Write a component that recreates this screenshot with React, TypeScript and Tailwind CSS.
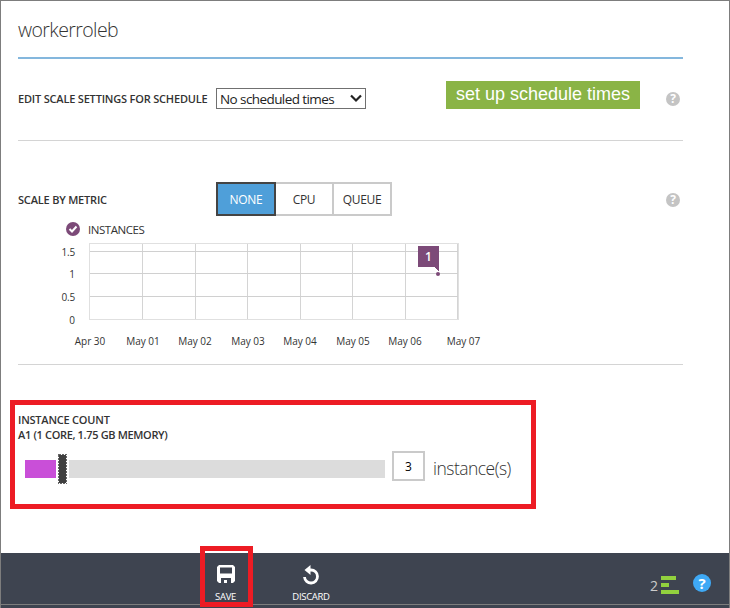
import React from "react";

const xLabels = [
  { text: "Apr 30", x: 1 },
  { text: "May 01", x: 54 },
  { text: "May 02", x: 106 },
  { text: "May 03", x: 159 },
  { text: "May 04", x: 211 },
  { text: "May 05", x: 264 },
  { text: "May 06", x: 316 },
  { text: "May 07", x: 374.5 },
];

function Help() {
  return (
    <span className="flex h-[14px] w-[14px] items-center justify-center rounded-full bg-[#c4c4c4] text-[12px] leading-[14px] font-bold text-white">
      ?
    </span>
  );
}

function Chart() {
  return (
    <svg width="370" height="77" viewBox="0 0 370 77" shapeRendering="crispEdges" className="block">
      {[53, 106, 158, 211, 263, 316, 368].map((x) => (
        <rect key={x} x={x} y="0" width="1" height="77" fill="#d4d4d4" />
      ))}
      {[8, 30, 53].map((y) => (
        <rect key={y} x="0" y={y} width="370" height="1" fill="#d0d0d0" />
      ))}
      <rect x="0.5" y="0.5" width="369" height="76" fill="none" stroke="#e0e0e0" />
      <rect x="329" y="3" width="21" height="21" fill="#7c4a78" />
      <path d="M345 24h5v4z" fill="#7c4a78" />
      <circle cx="349" cy="31" r="2" fill="#7c4a78" shapeRendering="auto" />
      <text x="339.500" y="18" textAnchor="middle" fill="#fff" fontSize="12" fontWeight="600">1</text>
    </svg>
  );
}

export default function App() {
  return (
    <div className="relative flex h-[608px] w-[730px] flex-col overflow-hidden bg-white font-['Open_Sans','Noto_Sans',sans-serif] text-[#333] whitespace-nowrap">
      <main className="flex h-[553px] flex-col border border-b-0 border-[#7d7d7d] pl-[17px]">
        <header className="h-[58px] w-[665px] border-b-2 border-[#84b7dd] pt-[15px]">
          <h1 className="text-[19.500px] leading-[28px] font-light tracking-[-0.600px] text-[#333]">workerroleb</h1>
        </header>

        <section className="flex h-[82px] w-[665px] items-start border-b border-[#d4d4d4]">
          <h2 className="mt-[32px] w-[198px] text-[11px] leading-4 font-semibold tracking-[-0.190px]">EDIT SCALE SETTINGS FOR SCHEDULE</h2>
          <div className="mt-[29px] flex h-[21px] w-[150px] items-center justify-between border border-[#707070] pr-[3px] pl-[3px] text-[13.500px] leading-[20px] text-[#222]">
            <span className="mt-px tracking-[-0.580px]">No scheduled times</span>
            <svg width="12" height="9" viewBox="0 0 12 9" fill="none" stroke="#222" strokeWidth="2.200"><path d="M1 1.500l5 5 5-5" /></svg>
          </div>
          <div className="mt-[22px] ml-[80px] h-[28px] w-[194px] bg-[#8ab446] text-center font-['Liberation_Sans',Arial,sans-serif] text-[18px] leading-[26px] text-white">set up schedule times</div>
          <div className="mt-[33px] ml-[26px]"><Help /></div>
        </section>

        <section className="h-[224px] w-[665px] border-b border-[#d4d4d4]">
          <div className="flex pt-[41px]">
            <h2 className="w-[198px] pt-[10px] text-[11px] leading-4 font-semibold tracking-[-0.190px]">SCALE BY METRIC</h2>
            <div className="flex h-[34px] text-center text-[12px] leading-[31px]">
              <div className="w-[60px] border-2 border-[#444] bg-[#4f9fd9] text-white"><span className="tracking-[-0.300px]">NONE</span></div>
              <div className="w-[58px] border-2 border-l-0 border-[#cacaca]"><span className="tracking-[-0.300px]">CPU</span></div>
              <div className="w-[58px] border-2 border-l-0 border-[#cacaca]"><span className="tracking-[-0.350px]">QUEUE</span></div>
            </div>
            <div className="mt-[11px] ml-[274px]"><Help /></div>
          </div>
          <div className="mt-[5px] flex h-[16px] items-center pl-[48px]">
            <svg width="14" height="14" viewBox="0 0 14 14"><circle cx="7" cy="7" r="7" fill="#7c4a78" /><path d="M3.500 7l2.500 2.500 4.500-5" fill="none" stroke="#fff" strokeWidth="2" /></svg>
            <span className="mt-[2px] ml-[8px] text-[11.500px] leading-4 tracking-[-0.450px]">INSTANCES</span>
          </div>
          <div className="mt-[6px] flex">
            <div className="flex w-[57px] flex-col pt-[2px] text-right text-[10px] text-[#333]">
              <span className="h-[22px] leading-[15px] tracking-[-0.200px]">1.5</span>
              <span className="h-[23px] leading-[15px]">1</span>
              <span className="h-[23px] leading-[15px] tracking-[-0.200px]">0.5</span>
              <span className="h-[7px] leading-[15px]">0</span>
            </div>
            <div className="ml-[14px]">
              <Chart />
              <svg width="420" height="26" className="block overflow-visible">
                {xLabels.map((l) => (
                  <text key={l.text} x={l.x} y="25" textAnchor="middle" fontSize="10" fill="#333">{l.text}</text>
                ))}
              </svg>
            </div>
          </div>
        </section>

        <section className="mt-[35px] ml-[-8px] h-[109px] w-[526px] border-5 border-[#ed1c24] pt-[7px] pl-[3px]">
          <div className="text-[11px] leading-[15px] font-semibold">
            <div className="tracking-[-0.220px]">INSTANCE COUNT</div>
            <div className="tracking-[-0.340px]">A1 (1 CORE, 1.75 GB MEMORY)</div>
          </div>
          <div className="mt-[9px] flex h-[34px] items-start pl-[7px]">
            <div className="mt-[9px] h-[18px] w-[31px] bg-[#c94fd8]" />
            <svg className="mt-[3px] ml-[2px]" width="9" height="30" viewBox="0 0 9 30" shapeRendering="crispEdges">
              <rect x="1" y="1" width="7" height="28" fill="#404040" />
              <rect x="0.5" y="0.5" width="8" height="29" fill="none" stroke="#666" strokeDasharray="2 1" />
            </svg>
            <div className="mt-[9px] ml-[2px] h-[18px] w-[316px] bg-[#dcdcdc]" />
            <div className="ml-[7px] h-[30px] w-[33px] border-2 border-[#cacaca] text-center text-[12px] leading-[28px] text-black">3</div>
            <div className="mt-[2px] ml-[8px] text-[17.500px] leading-[30px] font-light tracking-[-0.520px] text-[#333]">instance(s)</div>
          </div>
        </section>
      </main>

      <footer className="flex h-[55px] items-start border-x border-[#7d7d7d] bg-[#3e4450] text-[9.500px] text-white">
        <button className="z-10 mt-[-7px] ml-[199px] flex h-[61px] w-[53px] flex-col items-center border-5 border-[#ed1c24] pt-[14px] pr-[2px]">
          <svg className="shrink-0" width="18" height="18" viewBox="0 0 18 18"><path fill="#fff" fillRule="evenodd" d="M2 0h14l2 2v14l-2 2H2l-2-2V2zM3 2.500v6h12v-6zM4 13v5h3v-3h3v3h4v-5z" /></svg>
          <span className="mt-[8px] shrink-0 leading-[12px] tracking-[-0.300px]">SAVE</span>
        </button>
        <button className="mt-[12px] ml-[33px] flex w-[50px] flex-col items-center">
          <svg width="20" height="20" viewBox="0 0 20 20"><path d="M9 5h1a6.500 6.500 0 1 1-6.500 7" fill="none" stroke="#fff" strokeWidth="2.800" /><path d="M9.500 0v10L3.500 5z" fill="#fff" /></svg>
          <span className="mt-[5px] leading-[14px] tracking-[-0.300px]">DISCARD</span>
        </button>
        <div className="mt-[23px] ml-[315px] flex items-start">
          <span className="mt-[2px] ml-[-1px] w-[11px] text-[14px] leading-[16px] text-[#ccc]">2</span>
          <div className="flex flex-col gap-[3px]">
            <div className="h-[4px] w-[15px] bg-[#92d13e]" />
            <div className="h-[4px] w-[8px] bg-[#92d13e]" />
            <div className="h-[4px] w-[18px] bg-[#92d13e]" />
          </div>
          <span className="mt-[-2px] ml-[14px] h-[18px] w-[18px] rounded-full bg-[#3fa9f5] text-center text-[15px] leading-[18px] font-bold">?</span>
        </div>
      </footer>
      <div className="absolute top-[604px] left-0 h-px w-full bg-[#7d7d7d]" />
    </div>
  );
}
